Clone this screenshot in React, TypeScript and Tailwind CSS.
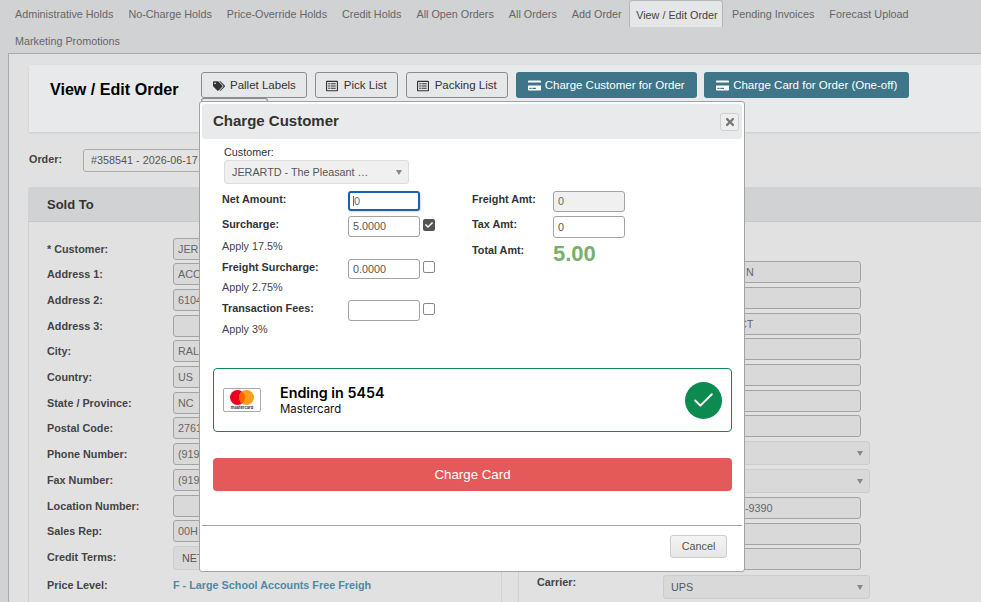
import React from 'react';
import { Check } from 'lucide-react';
import { FaTags, FaRegListAlt, FaCreditCard, FaTimes, FaCheck } from 'react-icons/fa';

const tabs = ['Administrative Holds', 'No-Charge Holds', 'Price-Override Holds', 'Credit Holds', 'All Open Orders', 'All Orders', 'Add Order', 'View / Edit Order', 'Pending Invoices', 'Forecast Upload', 'Marketing Promotions'];

const soldTo: { label: string; value: string; rowClass: string; select?: boolean }[] = [
  { label: '* Customer:', value: 'JER', rowClass: 'h-[25px]' },
  { label: 'Address 1:', value: 'ACC', rowClass: 'h-[26px]' },
  { label: 'Address 2:', value: '6104', rowClass: 'h-[26px]' },
  { label: 'Address 3:', value: '', rowClass: 'h-[25px]' },
  { label: 'City:', value: 'RAL', rowClass: 'h-[26px]' },
  { label: 'Country:', value: 'US', rowClass: 'h-[26px]' },
  { label: 'State / Province:', value: 'NC', rowClass: 'h-[25px]' },
  { label: 'Postal Code:', value: '2761', rowClass: 'h-[26px]' },
  { label: 'Phone Number:', value: '(919', rowClass: 'h-[26px]' },
  { label: 'Fax Number:', value: '(919', rowClass: 'h-[26px]' },
  { label: 'Location Number:', value: '', rowClass: 'h-[25px]' },
  { label: 'Sales Rep:', value: '00H', rowClass: 'h-[26px]' },
  { label: 'Credit Terms:', value: 'NET', rowClass: 'h-[31px]', select: true },
];

// only what shows to the right of the dialog is written out
const shipTo: { value?: string; pad?: string; select?: boolean; h: string }[] = [
  { value: 'N', pad: 'pl-[82px]', h: 'h-[26px]' },
  { h: 'h-[26px]' },
  { value: 'CT', pad: 'pl-[75px]', h: 'h-[25px]' },
  { h: 'h-[26px]' },
  { h: 'h-[26px]' },
  { h: 'h-[25px]' },
  { h: 'h-[26px]' },
  { select: true, h: 'h-[28px]' },
  { select: true, h: 'h-[28px]' },
  { value: '-9390', pad: 'pl-[81px]', h: 'h-[26px]' },
  { h: 'h-[25px]' },
  { h: 'h-[26px]' },
];

function Caret() {
  return <span className="ml-auto h-0 w-0 border-x-[3px] border-t-[5px] border-x-transparent border-t-[#888]" />;
}

function ActionButton({ icon, label, primary }: { icon: React.ReactNode; label: string; primary?: boolean }) {
  return (
    <button className={primary
      ? 'flex h-[26px] items-center gap-[4px] rounded-[3px] bg-[#3f7589] px-[12px] pt-[1px] text-[11.5px] text-white'
      : 'flex h-[26px] items-center gap-[5.5px] rounded-[3px] border border-[#8b8c8d] bg-[#e6e7e9] px-[10.5px] pt-[1px] text-[11.5px] text-[#333]'}>
      {icon}
      {label}
    </button>
  );
}

export default function App() {
  return (
    <div className="relative h-[602px] w-[981px] overflow-hidden bg-[#d1d2d4] font-['Liberation_Sans',Arial,sans-serif] text-[10.8px] text-[#444]">
      {/* tabs */}
      <div className="flex h-[53px] flex-wrap content-start pl-[7.5px]">
        {tabs.map((t) => {
          const active = t === 'View / Edit Order';
          return (
            <div key={t} className={active
              ? 'mr-[2px] flex h-[27px] items-center rounded-t-[3px] border border-b-0 border-[#b5b6b8] bg-[#e5e6e8] pl-[6px] pr-[4px] pt-[2px] text-[#444]'
              : 'flex h-[27px] items-center px-[7.5px] pt-[2px] text-[#666]'}>
              {t}
            </div>
          );
        })}
      </div>

      {/* page body */}
      <div className="ml-[8px] h-[600px] border-l border-t border-[#a9aaac] bg-[#e1e1e1]">
        <div className="ml-[20px] mt-[11px] flex h-[67px] items-start bg-[#e8e9eb] pt-[7px] shadow-[0_1px_2px_rgba(0,0,0,0.1)]">
          <h1 className="w-[172px] pl-[21px] pt-[6px] text-[16.1px] font-bold leading-[22px] text-black">View / Edit Order</h1>
          <div className="flex gap-[7.5px]">
            <ActionButton icon={<FaTags size={12} color="#333" />} label="Pallet Labels" />
            <ActionButton icon={<FaRegListAlt size={12} color="#333" />} label="Pick List" />
            <ActionButton icon={<FaRegListAlt size={12} color="#333" />} label="Packing List" />
            <ActionButton primary icon={<FaCreditCard size={13} color="white" />} label="Charge Customer for Order" />
            <ActionButton primary icon={<FaCreditCard size={13} color="white" />} label="Charge Card for Order (One-off)" />
          </div>
        </div>

        <div className="ml-[20px] mt-[17px] flex items-center">
          <span className="w-[54px] pb-[3px] font-bold">Order:</span>
          <div className="flex h-[23px] w-[300px] items-center rounded-[3px] border border-[#aaa] bg-[#e3e3e3] px-[7px] text-[#555]">#358541 - 2026-06-17</div>
        </div>

        <div className="ml-[19px] mt-[15px] flex gap-[16px]">
          <section className="h-[500px] w-[474px] shrink-0 rounded-t-[3px] border-x border-[#d0d0d0]">
            <div className="-mx-px flex h-[35px] items-center rounded-t-[3px] border-b border-[#c6c6ca] bg-[#d1d2d4] pl-[19px] pt-[2px] text-[13px] font-bold text-[#333]">Sold To</div>
            <div className="pl-[18px] pt-[16px]">
              {soldTo.map((r) => (
                <div key={r.label} className={`flex items-start ${r.rowClass}`}>
                  <span className="w-[126px] pt-[3px] font-bold text-[#444]">{r.label}</span>
                  <div className={r.select
                    ? 'flex h-[24px] w-[200px] items-center rounded-[3px] border border-[#ccc] bg-[#d9d9d9] px-[8px] text-[#555]'
                    : 'flex h-[22px] w-[200px] items-center rounded-[3px] border border-[#a3a3a3] bg-[#d9d9d9] px-[4px] text-[#666]'}>
                    {r.value}
                  </div>
                </div>
              ))}
              <div className="flex items-center">
                <span className="w-[126px] font-bold text-[#444]">Price Level:</span>
                <span className="font-bold text-[#4f8aa1]">F - Large School Accounts Free Freigh</span>
              </div>
            </div>
          </section>

          <section className="h-[500px] w-[470px] shrink-0 border-l border-[#d0d0d0]">
            <div className="-ml-px h-[35px] rounded-t-[3px] border-b border-[#c6c6ca] bg-[#d1d2d4]" />
            <div className="pl-[144px] pt-[39px]">
              {shipTo.map((r, i) => (
                <div key={i} className={r.h}>
                  {r.select ? (
                    <div className="flex h-[24px] w-[207px] items-center rounded-[3px] border border-[#ccc] bg-[#d9d9d9] pr-[6px]">
                      <Caret />
                    </div>
                  ) : (
                    <div className={`flex h-[22px] w-[198px] items-center rounded-[3px] border border-[#a3a3a3] bg-[#d9d9d9] text-[#666] ${r.pad ?? ''}`}>
                      {r.value}
                    </div>
                  )}
                </div>
              ))}
              <div className="-ml-[126px] flex items-center">
                <span className="w-[126px] pb-[10px] font-bold text-[#444]">Carrier:</span>
                <div className="flex h-[24px] w-[207px] items-center rounded-[3px] border border-[#ccc] bg-[#d9d9d9] pl-[7px] pr-[6px] text-[#555]">
                  UPS
                  <Caret />
                </div>
              </div>
            </div>
          </section>
        </div>
      </div>

      {/* button hidden behind the dialog */}
      <div className="absolute left-[201px] top-[98px] h-[5px] w-[67px] rounded-t-[3px] border border-b-0 border-[#8b8c8d]" />

      {/* dialog */}
      <div className="absolute left-[199px] top-[101px] flex h-[471px] w-[546px] flex-col rounded-[3px] border border-[#a3a3a3] bg-white px-[2px] pt-[2px] text-[#333]">
        <div className="flex h-[35px] shrink-0 items-center justify-between rounded-[3px] bg-[#e9eaec] pl-[11px] pr-[3px]">
          <h2 className="pb-[2px] text-[15px] font-bold leading-none text-[#333]">Charge Customer</h2>
          <button className="flex h-[18px] w-[19px] items-center justify-center rounded-[3px] border border-[#d0d0d0] bg-[#eee]">
            <FaTimes size={12} color="#777" />
          </button>
        </div>

        <div className="ml-[22px] mt-[7px] leading-[12px] text-[#333]">Customer:</div>
        <div className="ml-[22px] mt-[2px] flex h-[24px] w-[185px] shrink-0 items-center rounded-[3px] border border-[#ddd] bg-[#f0f0f0] pl-[7px] pr-[6px] text-[#555]">
          JERARTD - The Pleasant …
          <Caret />
        </div>

        <div className="ml-[20px] mt-[6px] flex">
          <div className="w-[250px]">
            <div className="flex h-[25px] items-start">
              <span className="w-[126px] pt-[1px] font-bold text-[#333]">Net Amount:</span>
              <div className="mt-[1px] flex h-[20px] w-[72px] items-center rounded-[3px] border-2 border-[#1c5fb0] pl-[3px] leading-none text-[#3f7589] shadow-[1px_1px_2px_rgba(0,0,0,0.15)]">
                <span className="border-l border-[#3f7589]">0</span>
              </div>
            </div>
            <div className="flex h-[22px] items-start">
              <span className="w-[126px] pt-[1px] font-bold text-[#333]">Surcharge:</span>
              <div className="mt-[1px] flex h-[21px] w-[72px] items-center rounded-[3px] border border-[#a3a3a3] pl-[4px] text-[#555]">5.0000</div>
              <span className="ml-[3px] mt-[4px] flex h-[12px] w-[12px] items-center justify-center rounded-[2px] bg-[#555]"><FaCheck size={8} color="white" /></span>
            </div>
            <div className="h-[21px] pt-[3px] leading-[12px] text-[#444]">Apply 17.5%</div>
            <div className="flex h-[22px] items-start">
              <span className="w-[126px] pt-[1px] font-bold text-[#333]">Freight Surcharge:</span>
              <div className="mt-[1px] flex h-[20px] w-[72px] items-center rounded-[3px] border border-[#a3a3a3] pl-[4px] text-[#555]">0.0000</div>
              <span className="ml-[3px] mt-[3px] h-[12px] w-[12px] rounded-[2px] border border-[#888]" />
            </div>
            <div className="h-[19px] pt-[1px] leading-[12px] text-[#444]">Apply 2.75%</div>
            <div className="flex h-[22px] items-start">
              <span className="w-[126px] pt-[1px] font-bold text-[#333]">Transaction Fees:</span>
              <div className="mt-[1px] h-[21px] w-[72px] rounded-[3px] border border-[#a3a3a3]" />
              <span className="ml-[3px] mt-[4px] h-[12px] w-[12px] rounded-[2px] border border-[#888]" />
            </div>
            <div className="pt-[2px] leading-[12px] text-[#444]">Apply 3%</div>
          </div>

          <div>
            <div className="flex h-[25px] items-start">
              <span className="w-[81px] pt-[1px] font-bold text-[#333]">Freight Amt:</span>
              <div className="mt-[1px] flex h-[21px] w-[72px] items-center rounded-[3px] border border-[#a3a3a3] bg-[#f0f0f0] pl-[4px] text-[#666]">0</div>
            </div>
            <div className="flex h-[26px] items-start">
              <span className="w-[81px] pt-[1px] font-bold text-[#333]">Tax Amt:</span>
              <div className="mt-[1px] flex h-[22px] w-[72px] items-center rounded-[3px] border border-[#a3a3a3] pl-[4px] text-[#555]">0</div>
            </div>
            <div className="flex items-start">
              <span className="w-[81px] pt-[1px] font-bold text-[#333]">Total Amt:</span>
              <span className="mt-[1px] text-[22px] font-bold leading-[24px] text-[#75b16c]">5.00</span>
            </div>
          </div>
        </div>

        {/* saved card */}
        <div className="ml-[11px] mr-[10px] mt-[33px] flex h-[64px] shrink-0 items-center rounded-[4px] border border-[#0c8a4f] pl-[9px] pr-[9px] font-['Inter',sans-serif]">
          <div className="flex h-[24px] w-[38px] flex-col items-center rounded-[2px] border border-[#aaa] pt-[1px]">
            <svg width="24" height="15" viewBox="0 0 24 15">
              <circle cx="7.5" cy="7.5" r="7.5" fill="#eb001b" />
              <circle cx="16.5" cy="7.5" r="7.5" fill="#f79e1b" />
              <path d="M12 1.5a7.5 7.5 0 0 1 0 12a7.5 7.5 0 0 1 0-12z" fill="#ff5f00" />
            </svg>
            <span className="text-[4px] font-bold leading-[5px] text-[#333]">mastercard</span>
          </div>
          <div className="ml-[19px]">
            <div className="text-[14.3px] font-semibold leading-[17px] text-black">Ending in 5454</div>
            <div className="mt-[1px] text-[11.4px] leading-[14px] text-[#111]">Mastercard</div>
          </div>
          <span className="ml-auto flex h-[37px] w-[37px] items-center justify-center rounded-full bg-[#0c8a4f]">
            <Check size={25} strokeWidth={1.8} color="white" />
          </span>
        </div>

        <button className="ml-[11px] mr-[10px] mt-[26px] h-[33px] shrink-0 rounded-[4px] bg-[#e45959] text-[13.3px] text-white">Charge Card</button>

        <div className="mt-[34px] border-t border-[#a3a3a3]" />
        <div className="flex justify-end pr-[15px] pt-[9px]">
          <button className="h-[23px] w-[57px] rounded-[3px] border border-[#ccc] bg-[linear-gradient(#f4f4f4,#e6e6e6)] text-[#555]">Cancel</button>
        </div>
      </div>
    </div>
  );
}
